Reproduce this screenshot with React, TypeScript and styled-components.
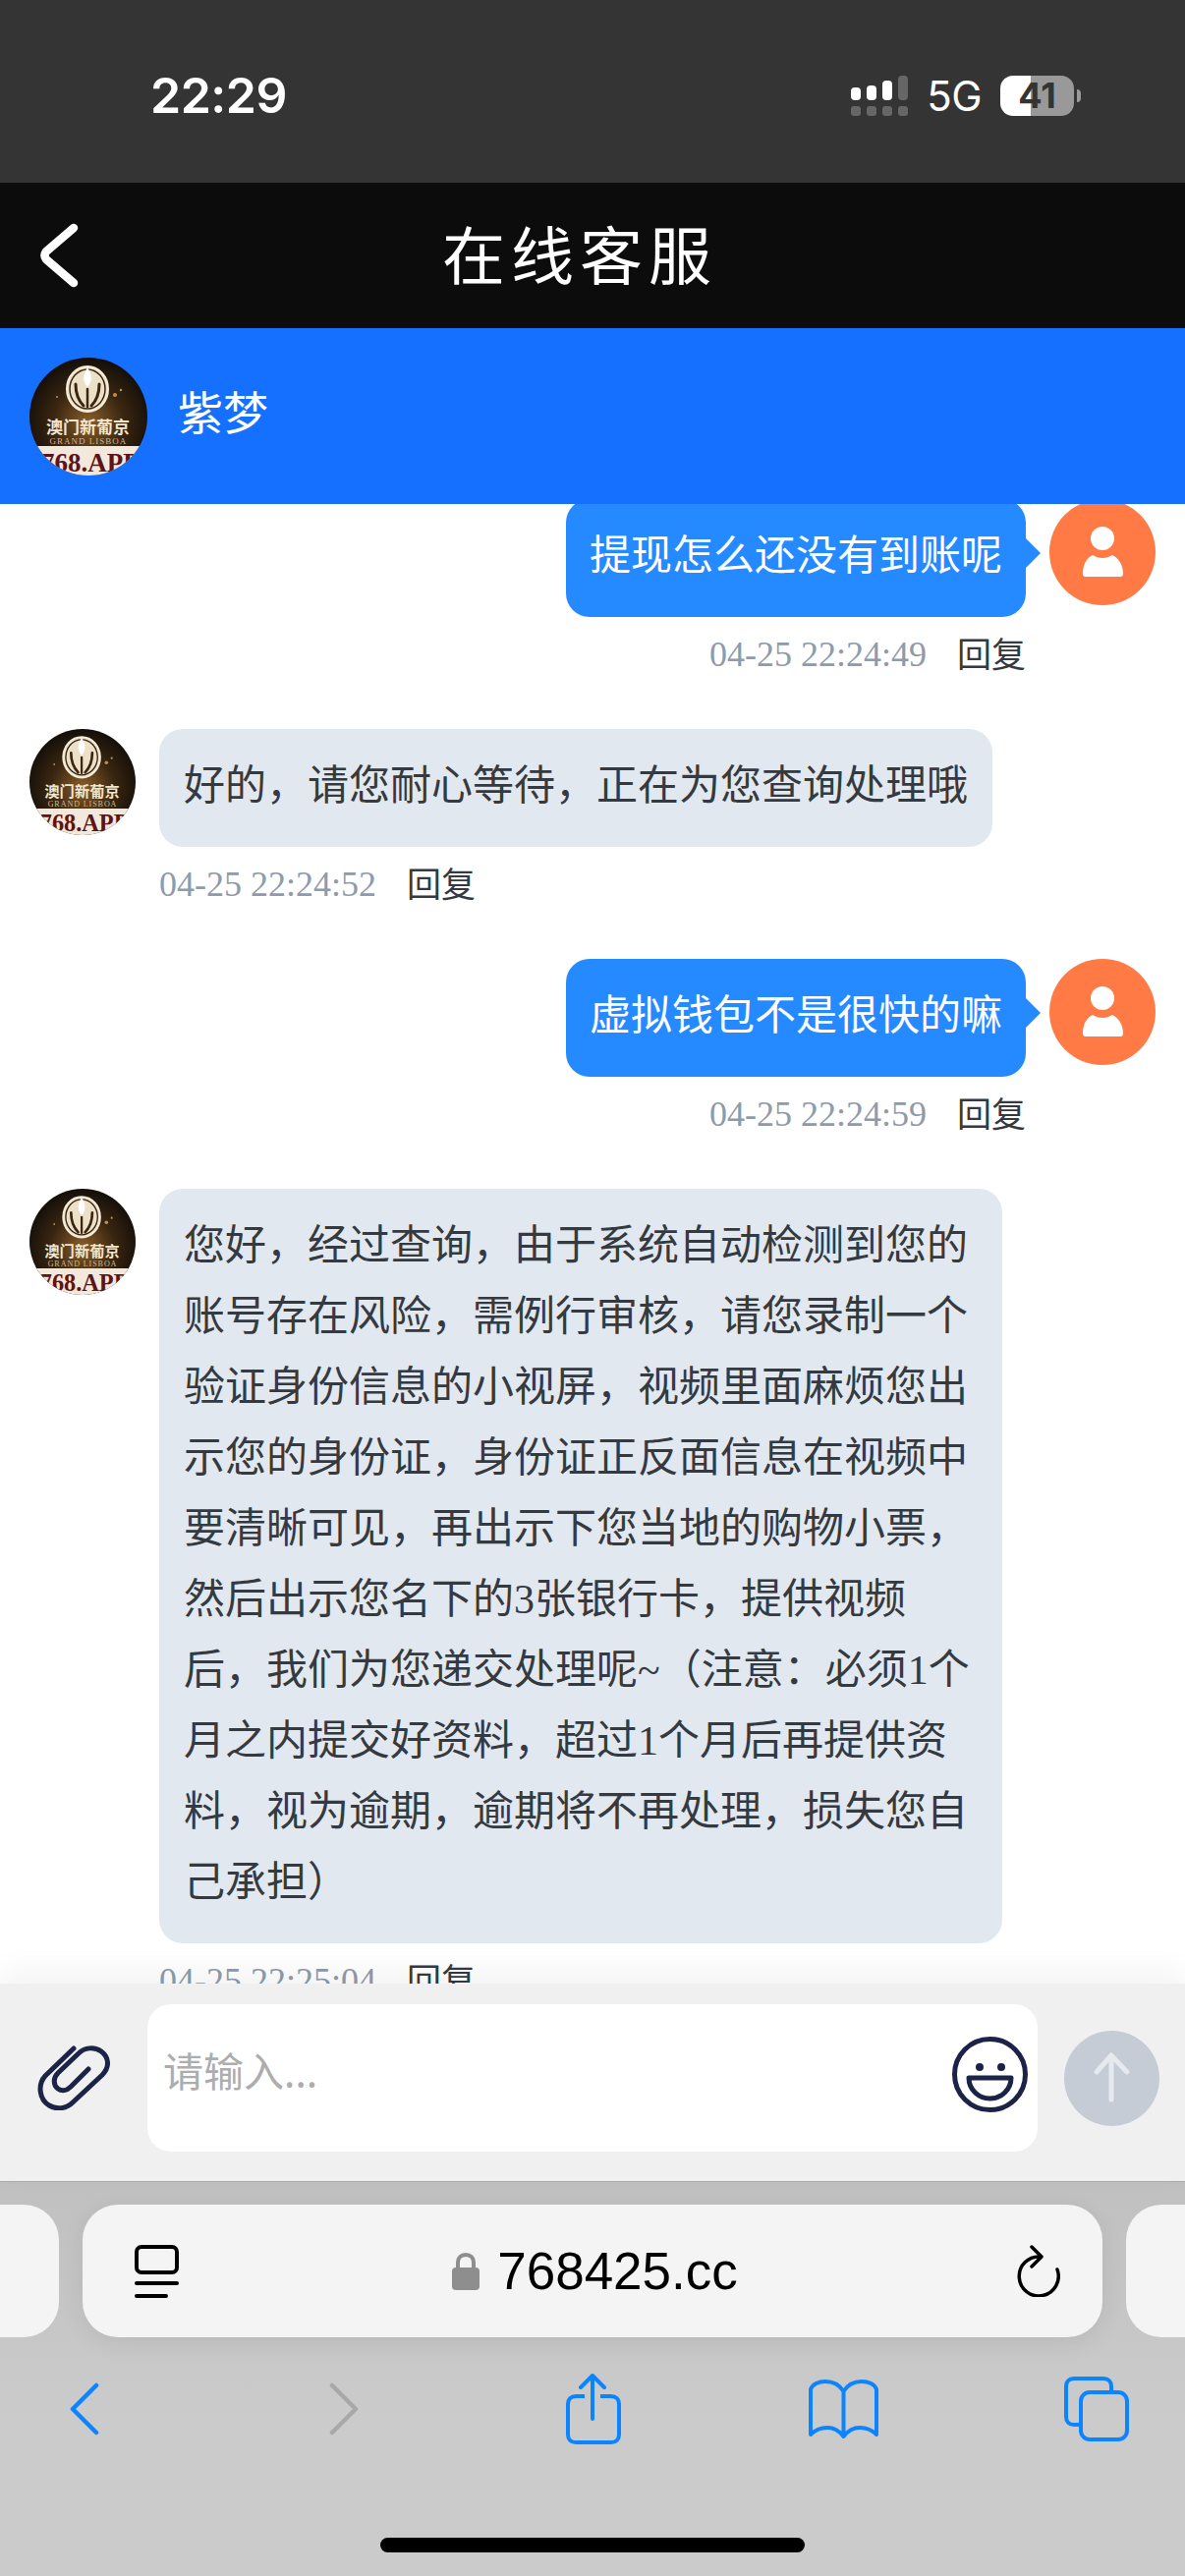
import React from "react";
import styled, { createGlobalStyle } from "styled-components";

const CJK = `"Noto Sans CJK SC", sans-serif`;
const MIXED = `"Liberation Serif", "Noto Sans CJK SC", serif`;
const UI = `Inter, "Liberation Sans", sans-serif`;
const INK = "#1b2347";
const IOS_BLUE = "#0a84ff";

const GlobalStyle = createGlobalStyle`
  html, body {
    margin: 0;
    padding: 0;
    background: #fff;
  }
  * {
    box-sizing: border-box;
  }
`;

const Page = styled.div`
  display: flex;
  flex-direction: column;
  width: 1206px;
  height: 2622px;
  overflow: hidden;
  background: #fff;
`;

/* ---------- status bar ---------- */
const StatusBar = styled.div`
  display: flex;
  align-items: center;
  justify-content: space-between;
  height: 186px;
  flex-shrink: 0;
  padding: 8px 106px 0 153px;
  background: #343434;
  color: #fff;
  font-family: ${UI};
`;
const Clock = styled.div`
  font-size: 50px;
  font-weight: 600;
  letter-spacing: -0.5px;
`;
const StatusRight = styled.div`
  display: flex;
  align-items: center;
`;
const Network = styled.span`
  margin: 0 19px 0 19px;
  font-size: 42px;
  font-weight: 400;
  line-height: 41px;
  letter-spacing: -0.5px;
`;
const Battery = styled.div`
  display: flex;
  align-items: center;
  justify-content: center;
  width: 75px;
  height: 41px;
  border-radius: 13px;
  background: linear-gradient(to right, #fff 41%, #999 41%);
  color: #343434;
  font-size: 36px;
  font-weight: 700;
`;
const BatteryNub = styled.div`
  width: 4px;
  height: 13px;
  margin-left: 3px;
  border-radius: 0 6px 6px 0;
  background: #999;
`;

/* ---------- nav ---------- */
const NavBar = styled.div`
  display: flex;
  align-items: center;
  height: 148px;
  flex-shrink: 0;
  padding: 0 0 0 40px;
  background: #0c0c0c;
`;
const NavTitle = styled.div`
  margin: 0 0 8px 370px;
  color: #fff;
  font-family: ${CJK};
  font-size: 64px;
  letter-spacing: 6px;
  line-height: 1;
`;

/* ---------- agent header ---------- */
const AgentHeader = styled.div`
  display: flex;
  align-items: center;
  gap: 31px;
  height: 179px;
  flex-shrink: 0;
  padding: 0 0 0 30px;
  background: #1570ff;
`;
const AgentName = styled.div`
  color: #fff;
  font-family: ${CJK};
  font-size: 46px;
  padding-bottom: 14px;
`;
const LogoWrap = styled.div<{ $size: number }>`
  width: ${(p) => p.$size}px;
  height: ${(p) => p.$size}px;
  flex-shrink: 0;
  border-radius: 50%;
  overflow: hidden;
  svg {
    display: block;
    width: 100%;
    height: 100%;
  }
`;

/* ---------- chat ---------- */
const Chat = styled.div`
  flex: 1;
  min-height: 0;
  overflow: hidden;
`;
const MessageList = styled.div`
  display: flex;
  flex-direction: column;
  gap: 51px;
  margin-top: -5px;
  padding: 0 30px;
`;
const Row = styled.div<{ $mine?: boolean }>`
  display: flex;
  flex-direction: ${(p) => (p.$mine ? "row-reverse" : "row")};
  gap: 24px;
`;
const MessageBody = styled.div<{ $mine?: boolean }>`
  display: flex;
  flex-direction: column;
  align-items: ${(p) => (p.$mine ? "flex-end" : "flex-start")};
`;
const Bubble = styled.div<{ $mine?: boolean; $long?: boolean }>`
  position: relative;
  width: ${(p) => (p.$long ? "858px" : "auto")};
  padding: 22px ${(p) => (p.$mine ? "24px" : "25px")} 26px;
  border-radius: 24px;
  background: ${(p) => (p.$mine ? "#2589ff" : "#e2e8f0")};
  color: ${(p) => (p.$mine ? "#fff" : "#343a40")};
  font-family: ${MIXED};
  font-size: 42px;
  line-height: 72px;
  white-space: nowrap;

  ${(p) =>
    p.$mine &&
    `
    &::after {
      content: "";
      position: absolute;
      top: 40px;
      right: -15px;
      border-top: 15px solid transparent;
      border-bottom: 15px solid transparent;
      border-left: 15px solid #2589ff;
    }
  `}
`;
const BubbleLine = styled.div``;
const Meta = styled.div`
  display: flex;
  align-items: center;
  gap: 31px;
  height: 50px;
  margin-top: 13px;
  white-space: nowrap;
`;
const Time = styled.span`
  color: #8f9bab;
  font-family: "Liberation Serif", serif;
  font-size: 36px;
`;
const Reply = styled.span`
  padding-bottom: 6px;
  color: #343a40;
  font-family: ${CJK};
  font-size: 35px;
`;
const UserAvatar = styled.div`
  width: 108px;
  height: 108px;
  flex-shrink: 0;
  border-radius: 50%;
  background: #ff7a45;
  svg {
    display: block;
  }
`;

/* ---------- composer ---------- */
const Composer = styled.div`
  position: relative;
  display: flex;
  align-items: center;
  height: 202px;
  flex-shrink: 0;
  padding: 0 26px 9px 38px;
  border-bottom: 1px solid #a9a9a9;
  background: #f0f0f0;
  box-shadow: 0 -12px 30px rgba(0, 0, 0, 0.05);
`;
const InputBox = styled.div`
  display: flex;
  align-items: center;
  justify-content: space-between;
  width: 906px;
  height: 150px;
  margin: 0 27px 0 38px;
  padding: 0 10px 8px 16px;
  border-radius: 24px;
  background: #fff;
`;
const Placeholder = styled.span`
  padding-bottom: 11px;
  color: #adadad;
  font-family: ${CJK};
  font-size: 41px;
`;
const SendButton = styled.div`
  width: 97px;
  height: 97px;
  flex-shrink: 0;
  border-radius: 50%;
  background: #c5ccd6;
  svg {
    display: block;
  }
`;

/* ---------- safari chrome ---------- */
const Safari = styled.div`
  display: flex;
  flex: 0 0 401px;
  flex-direction: column;
  background: linear-gradient(to bottom, #c0c0c0, #cbcbcb 60%);
`;
const TabStrip = styled.div`
  display: flex;
  gap: 24px;
  padding-top: 23px;
`;
const TabStub = styled.div<{ $side: "left" | "right" }>`
  width: 60px;
  height: 135px;
  flex-shrink: 0;
  border-radius: ${(p) => (p.$side === "left" ? "0 36px 36px 0" : "36px 0 0 36px")};
  background: #f4f4f4;
`;
const AddressPill = styled.div`
  display: flex;
  flex: 1;
  align-items: center;
  justify-content: space-between;
  height: 135px;
  padding: 0 43px 0 53px;
  border-radius: 36px;
  background: #f4f4f4;
  box-shadow: 0 6px 24px rgba(0, 0, 0, 0.07);
`;
const Address = styled.div`
  display: flex;
  align-items: center;
  gap: 18px;
  padding-right: 6px;
`;
const AddressText = styled.span`
  color: #000;
  font-family: "Liberation Sans", sans-serif;
  font-size: 53px;
  line-height: 1;
`;
const Toolbar = styled.div`
  display: grid;
  grid-template-columns: 264px 254px 254px 258px 80px;
  height: 72px;
  margin-top: 37px;
  padding-left: 46px;
`;
const ToolSlot = styled.div`
  display: flex;
  align-items: center;
  justify-content: center;
  width: 80px;
`;
const HomeBar = styled.div`
  align-self: center;
  width: 432px;
  height: 15px;
  margin-top: auto;
  margin-bottom: 24px;
  border-radius: 8px;
  background: #000;
`;

/* ---------- drawings ---------- */
const SignalIcon = () => (
  <svg width="58" height="41" viewBox="0 0 58 41">
    <rect x="0" y="12" width="10" height="13" rx="4" fill="#fff" />
    <rect x="16" y="10" width="10" height="15" rx="4" fill="#fff" />
    <rect x="32" y="5" width="10" height="20" rx="4" fill="#fff" />
    <rect x="48" y="0" width="10" height="25" rx="4" fill="#666" />
    <rect x="0" y="31" width="10" height="10" rx="3" fill="#666" />
    <rect x="16" y="31" width="10" height="10" rx="3" fill="#666" />
    <rect x="32" y="31" width="10" height="10" rx="3" fill="#666" />
    <rect x="48" y="31" width="10" height="10" rx="3" fill="#666" />
  </svg>
);

const BackIcon = () => (
  <svg width="40" height="66" viewBox="0 0 40 66" fill="none">
    <path d="M35 5 L7 29 Q4 33 7 37 L35 61" stroke="#fff" strokeWidth="8.5" strokeLinecap="round" strokeLinejoin="round" />
  </svg>
);

const LisboaLogo = () => (
  <svg viewBox="0 0 120 120">
    <defs>
      <radialGradient id="logoBg" cx="50%" cy="55%" r="60%">
        <stop offset="0" stopColor="#8a5f2a" />
        <stop offset="0.5" stopColor="#3a2611" />
        <stop offset="1" stopColor="#0b0907" />
      </radialGradient>
    </defs>
    <rect width="120" height="120" fill="url(#logoBg)" />
    <ellipse cx="59" cy="32" rx="21" ry="23" fill="#ece0c8" stroke="#f5ecd9" strokeWidth="2" />
    <ellipse cx="59" cy="32" rx="18" ry="20" fill="none" stroke="#3a2611" strokeWidth="1.5" />
    <path d="M59 10 C64 18 64 24 59 30 C54 24 54 18 59 10Z" fill="#fff" />
    <path d="M59 32 V50" stroke="#3a2611" strokeWidth="2.5" strokeLinecap="round" />
    <path d="M47 27 C47 37 50 44 55 49" stroke="#3a2611" strokeWidth="3" strokeLinecap="round" fill="none" />
    <path d="M71 27 C71 37 68 44 63 49" stroke="#3a2611" strokeWidth="3" strokeLinecap="round" fill="none" />
    <circle cx="87" cy="38" r="2" fill="#c4923f" />
    <circle cx="93" cy="33" r="1.2" fill="#c4923f" />
    <circle cx="28" cy="40" r="1" fill="#c4923f" />
    <text x="59.5" y="77" textAnchor="middle" fontFamily={CJK} fontSize="17" fontWeight="700" fill="#f2e6cf">
      澳门新葡京
    </text>
    <text x="60" y="88" textAnchor="middle" fontFamily="Liberation Serif, serif" fontSize="9" letterSpacing="1" fill="#cdb88f">
      GRAND LISBOA
    </text>
    <rect y="90" width="120" height="30" fill="#f3e8dc" />
    <text x="12" y="116" fontFamily="Liberation Serif, serif" fontSize="27" fontWeight="700" fill="#5c1418">
      768.APP
    </text>
  </svg>
);

const PersonIcon = () => (
  <svg width="108" height="108" viewBox="0 0 108 108">
    <circle cx="54" cy="40" r="12" fill="#fff" />
    <path d="M34 76 C34 66 38 60 44 57 C50 61 58 61 64 57 C70 60 75 66 75 76 C75 78 74 79 72 79 H37 C35 79 34 78 34 76Z" fill="#fff" />
  </svg>
);

const ClipIcon = () => (
  <svg width="74" height="66" viewBox="0 0 74 66" fill="none" style={{ flexShrink: 0 }}>
    <path
      d="M37 3 L8 31 C0 40 2 55 12 61 C20 66 30 64 36 58 L66 30 C74 22 73 12 65 6 C58 1 48 2 42 8 L21 28 C16 33 16 40 21 44 C25 47 30 46 34 42 L52 24"
      stroke={INK}
      strokeWidth="5"
      strokeLinecap="round"
    />
  </svg>
);

const SmileIcon = () => (
  <svg width="77" height="77" viewBox="0 0 77 77" fill="none">
    <circle cx="38.5" cy="38.5" r="36" stroke={INK} strokeWidth="5" />
    <circle cx="28" cy="31" r="4" fill={INK} />
    <circle cx="50" cy="31" r="4" fill={INK} />
    <path d="M17 42 H60 C60 54 50 63 38.5 63 C27 63 17 54 17 42Z" stroke={INK} strokeWidth="5" strokeLinejoin="round" />
  </svg>
);

const SendArrow = () => (
  <svg width="97" height="97" viewBox="0 0 97 97" fill="none">
    <path d="M48 25 V70 M33 42 L48 25 L64 42" stroke="#e6e9ee" strokeWidth="5" strokeLinecap="round" strokeLinejoin="round" />
  </svg>
);

const ReaderIcon = () => (
  <svg width="45" height="54" viewBox="0 0 45 54" fill="none">
    <rect x="2" y="2" width="41" height="26" rx="5" stroke="#000" strokeWidth="4" />
    <path d="M2 39 H43 M2 52 H32" stroke="#000" strokeWidth="4" strokeLinecap="round" />
  </svg>
);

const LockIcon = () => (
  <svg width="28" height="39" viewBox="0 0 28 39" fill="none">
    <path d="M6 18 V11 C6 6 9 3 14 3 C19 3 22 6 22 11 V18" stroke="#8e8e8e" strokeWidth="4" />
    <rect x="0" y="16" width="28" height="23" rx="4" fill="#8e8e8e" />
  </svg>
);

const ReloadIcon = () => (
  <svg width="44" height="53" viewBox="0 0 44 53" fill="none">
    <path d="M41 25 A20 20 0 1 1 24 12" stroke="#000" strokeWidth="3.5" strokeLinecap="round" />
    <path d="M15 2 L25 12 L15 22" stroke="#000" strokeWidth="3.5" strokeLinecap="round" strokeLinejoin="round" />
  </svg>
);

const ChevronIcon = ({ flip, color }: { flip?: boolean; color: string }) => (
  <svg width="30" height="54" viewBox="0 0 30 54" fill="none" style={flip ? { transform: "scaleX(-1)" } : undefined}>
    <path d="M27 3 L3 27 L27 51" stroke={color} strokeWidth="4.5" strokeLinecap="round" strokeLinejoin="round" />
  </svg>
);

const ShareIcon = () => (
  <svg width="56" height="72" viewBox="0 0 56 72" fill="none">
    <path d="M19 23 H10 C5 23 2 26 2 31 V62 C2 67 5 70 10 70 H46 C51 70 54 67 54 62 V31 C54 26 51 23 46 23 H35" stroke={IOS_BLUE} strokeWidth="4" />
    <path d="M27 2 V46 M15 14 L27 2 L39 14" stroke={IOS_BLUE} strokeWidth="4" strokeLinecap="round" strokeLinejoin="round" />
  </svg>
);

const BookIcon = () => (
  <svg width="71" height="60" viewBox="0 0 71 60" fill="none">
    <path
      d="M35.5 12 C31 5 24 2 17 2 C10 2 4 5 2 10 V56 C8 50 14 49 19 49 C26 49 31 52 35.5 58 C40 52 45 49 52 49 C57 49 63 50 69 56 V10 C67 5 61 2 54 2 C47 2 40 5 35.5 12Z M35.5 12 V58"
      stroke={IOS_BLUE}
      strokeWidth="4"
      strokeLinejoin="round"
    />
  </svg>
);

const TabsIcon = () => (
  <svg width="66" height="66" viewBox="0 0 66 66" fill="none">
    <path d="M15 49 H10 C5 49 2 46 2 41 V10 C2 5 5 2 10 2 H40 C45 2 48 5 48 10 V14" stroke={IOS_BLUE} strokeWidth="4" />
    <rect x="17" y="16" width="47" height="48" rx="9" stroke={IOS_BLUE} strokeWidth="4" />
  </svg>
);

/* ---------- data ---------- */
type Message = { mine?: boolean; time: string; lines: string[] };

const messages: Message[] = [
  { mine: true, time: "04-25 22:24:49", lines: ["提现怎么还没有到账呢"] },
  { time: "04-25 22:24:52", lines: ["好的，请您耐心等待，正在为您查询处理哦"] },
  { mine: true, time: "04-25 22:24:59", lines: ["虚拟钱包不是很快的嘛"] },
  {
    time: "04-25 22:25:04",
    lines: [
      "您好，经过查询，由于系统自动检测到您的",
      "账号存在风险，需例行审核，请您录制一个",
      "验证身份信息的小视屏，视频里面麻烦您出",
      "示您的身份证，身份证正反面信息在视频中",
      "要清晰可见，再出示下您当地的购物小票，",
      "然后出示您名下的3张银行卡，提供视频",
      "后，我们为您递交处理呢~（注意：必须1个",
      "月之内提交好资料，超过1个月后再提供资",
      "料，视为逾期，逾期将不再处理，损失您自",
      "己承担）",
    ],
  },
];

export default function App() {
  return (
    <Page>
      <GlobalStyle />
      <StatusBar>
        <Clock>22:29</Clock>
        <StatusRight>
          <SignalIcon />
          <Network>5G</Network>
          <Battery>41</Battery>
          <BatteryNub />
        </StatusRight>
      </StatusBar>

      <NavBar>
        <BackIcon />
        <NavTitle>在线客服</NavTitle>
      </NavBar>

      <AgentHeader>
        <LogoWrap $size={120}>
          <LisboaLogo />
        </LogoWrap>
        <AgentName>紫梦</AgentName>
      </AgentHeader>

      <Chat>
        <MessageList>
          {messages.map((m) => (
            <Row key={m.time} $mine={m.mine}>
              {m.mine ? (
                <UserAvatar>
                  <PersonIcon />
                </UserAvatar>
              ) : (
                <LogoWrap $size={108}>
                  <LisboaLogo />
                </LogoWrap>
              )}
              <MessageBody $mine={m.mine}>
                <Bubble $mine={m.mine} $long={m.lines.length > 1}>
                  {m.lines.map((line) => (
                    <BubbleLine key={line}>{line}</BubbleLine>
                  ))}
                </Bubble>
                <Meta>
                  <Time>{m.time}</Time>
                  <Reply>回复</Reply>
                </Meta>
              </MessageBody>
            </Row>
          ))}
        </MessageList>
      </Chat>

      <Composer>
        <ClipIcon />
        <InputBox>
          <Placeholder>请输入...</Placeholder>
          <SmileIcon />
        </InputBox>
        <SendButton>
          <SendArrow />
        </SendButton>
      </Composer>

      <Safari>
        <TabStrip>
          <TabStub $side="left" />
          <AddressPill>
            <ReaderIcon />
            <Address>
              <LockIcon />
              <AddressText>768425.cc</AddressText>
            </Address>
            <ReloadIcon />
          </AddressPill>
          <TabStub $side="right" />
        </TabStrip>
        <Toolbar>
          <ToolSlot>
            <ChevronIcon color={IOS_BLUE} />
          </ToolSlot>
          <ToolSlot>
            <ChevronIcon flip color="#a8a8a8" />
          </ToolSlot>
          <ToolSlot>
            <ShareIcon />
          </ToolSlot>
          <ToolSlot>
            <BookIcon />
          </ToolSlot>
          <ToolSlot>
            <TabsIcon />
          </ToolSlot>
        </Toolbar>
        <HomeBar />
      </Safari>
    </Page>
  );
}
